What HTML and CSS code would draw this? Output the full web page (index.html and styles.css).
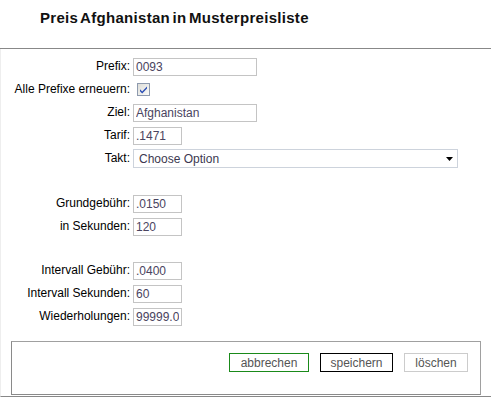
FILE: index.html
```html
<!DOCTYPE html>
<html>
	<head>
		<meta charset="utf-8">
		<title>Preis Afghanistan in Musterpreisliste</title>
		<link rel="stylesheet" href="styles.css">
	</head>
	<body>
		<div class="head">
			<h1><span>Preis Afghanistan</span> <span>in Musterpreisliste</span></h1>
		</div>
		<div class="page">
			<div class="form">
				<label>Prefix:</label>
				<div class="field"><input class="wide" type="text" value="0093"></div>
				<label>Alle Prefixe erneuern:</label>
				<div class="field">
					<span class="check">
						<svg width="13" height="13" viewBox="0 0 13 13">
							<defs>
								<linearGradient id="cb" x1="0" y1="0" x2="1" y2="1">
									<stop offset="0" stop-color="#dcdcd7"/>
									<stop offset="1" stop-color="#fbfbf9"/>
								</linearGradient>
							</defs>
							<rect x="0.5" y="0.5" width="12" height="12" fill="url(#cb)" stroke="#8e9aae"/>
							<path d="M3 6.2 L5.2 8.6 L10 3.4 L10 5.4 L5.2 10.4 L3 8.2 Z" fill="#2a4db5"/>
						</svg>
					</span>
				</div>
				<label>Ziel:</label>
				<div class="field"><input class="wide" type="text" value="Afghanistan"></div>
				<label>Tarif:</label>
				<div class="field"><input class="short" type="text" value=".1471"></div>
				<label>Takt:</label>
				<div class="field">
					<div class="select">
						<span>Choose Option</span>
						<svg width="7" height="4" viewBox="0 0 7 4"><path d="M0 0 H7 L3.5 4 Z" fill="#000"/></svg>
					</div>
				</div>

				<div class="gap"></div>

				<label>Grundgebühr:</label>
				<div class="field"><input class="short" type="text" value=".0150"></div>
				<label>in Sekunden:</label>
				<div class="field"><input class="short" type="text" value="120"></div>

				<div class="gap"></div>

				<label>Intervall Gebühr:</label>
				<div class="field"><input class="short" type="text" value=".0400"></div>
				<label>Intervall Sekunden:</label>
				<div class="field"><input class="short" type="text" value="60"></div>
				<label>Wiederholungen:</label>
				<div class="field"><input class="short" type="text" value="99999.0"></div>
			</div>

			<div class="buttons">
				<button type="button" class="cancel">abbrechen</button>
				<button type="button" class="save">speichern</button>
				<button type="button" class="delete">löschen</button>
			</div>
		</div>
	</body>
</html>
```
FILE: styles.css
```css
*{
	margin: 0;
	padding: 0;
	box-sizing: border-box;
}
body{
	width: 491px;
	font-family: "Liberation Sans", Arial, sans-serif;
	font-size: 12px;
	color: #000;
	background-color: #fff;
}
.head{
	height: 49px;
	padding: 9px 0 0 40px;
	border-bottom: 1px solid #888;
}
.head h1{
	font-size: 15px;
	font-weight: bold;
	color: #111;
	line-height: 18px;
	letter-spacing: 0.3px;
	word-spacing: -2px;
}
.page{
	height: 348px;
	padding-top: 6px;
	border-left: 1px solid #eee;
	border-bottom: 1px solid #888;
}
.form{
	display: grid;
	grid-template-columns: 129px 1fr;
	grid-template-rows: repeat(5, 23px) 22px 23px 23px 21px repeat(3, 23px);
	column-gap: 3px;
}
.form label{
	text-align: right;
	line-height: 23px;
	white-space: nowrap;
}
.field{
	display: flex;
	align-items: center;
}
.form .gap{
	grid-column: 1 / 3;
}
input{
	height: 18px;
	padding: 0 2px;
	border: 1px solid #c4c4c4;
	font-family: "Liberation Sans", Arial, sans-serif;
	font-size: 12px;
	color: #4a4460;
	background-color: #fff;
	outline: none;
}
.wide{
	width: 124px;
}
.short{
	width: 49px;
}
.check{
	display: flex;
	margin-left: 4px;
	margin-top: -1px;
}
.select{
	display: flex;
	align-items: center;
	justify-content: space-between;
	width: 325px;
	height: 19px;
	padding: 0 4px 0 5px;
	border: 1px solid #cdd3dc;
	color: #3c3850;
	background-color: #fff;
}
.select svg{
	margin-top: 1px;
}
.buttons{
	display: flex;
	justify-content: flex-end;
	gap: 11px;
	width: 470px;
	height: 54px;
	margin: 13px 0 0 10px;
	padding: 11px 12px 0 0;
	border: 1px solid #8a8a8a;
	border-top-color: #a0a0a0;
	border-right-color: #a0a0a0;
}
button{
	height: 19px;
	font-family: "Liberation Sans", Arial, sans-serif;
	font-size: 12px;
	color: #555;
	background-color: #fff;
	border: 1px solid #ccc;
}
.cancel{
	width: 80px;
	border-color: #1a8a1a;
}
.save{
	width: 73px;
	border-color: #000;
}
.delete{
	width: 64px;
	border-color: #ccc;
}
```
